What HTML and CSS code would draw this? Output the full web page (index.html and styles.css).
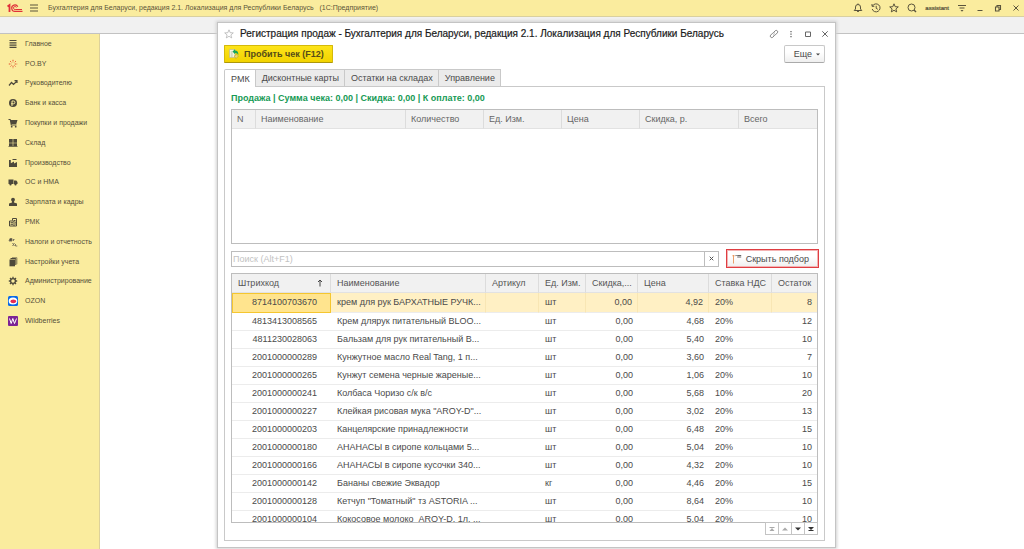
FILE: index.html
```html
<!DOCTYPE html>
<html lang="ru">
<head>
<meta charset="utf-8">
<title>Регистрация продаж</title>
<link rel="stylesheet" href="styles.css">
</head>
<body>
<div class="app">
  <header class="topbar">
    <svg class="logo" viewBox="0 0 16 10" fill="none" stroke="#e0313a"><path d="M.5 3.500 2.500 2V9" stroke-width="1.800"/><path d="M10.800 3.800A3.200 3.200 0 1 0 8 8.400H15.500" stroke-width="1.200"/><path d="M9.400 4.500A1.500 1.500 0 1 0 8.200 6.500H15" stroke-width="1"/></svg>
    <button class="icon-btn menu" aria-label="Меню"><svg viewBox="0 0 10 10"><path d="M1 2h8M1 5h8M1 8h8"/></svg></button>
    <span class="app-title">Бухгалтерия для Беларуси, редакция 2.1. Локализация для Республики Беларусь &nbsp; (1С:Предприятие)</span>
    <div class="top-tools">
      <button class="icon-btn" aria-label="Уведомления"><svg viewBox="0 0 10 10"><path d="M1.200 7.500h7.600L7.500 6V4a2.500 2.500 0 0 0-5 0v2zM5 .5v1M4 8q1 1.500 2 0"/></svg></button>
      <button class="icon-btn" aria-label="История"><svg viewBox="0 0 10 10"><path d="M1.500 3a4 4 0 1 1-.3 3M1 1v2.300h2.300M5.200 2.800v2.500l1.600 1"/></svg></button>
      <button class="icon-btn" aria-label="Избранное"><svg viewBox="0 0 10 10"><path d="m5 .8 1.200 2.900 3.100.2-2.400 2 .8 3L5 7.300 2.300 8.900l.8-3-2.400-2 3.100-.2z"/></svg></button>
      <button class="icon-btn" aria-label="Поиск"><svg viewBox="0 0 10 10"><circle cx="4.500" cy="4.500" r="3.500"/><path d="m7 7 2 2" stroke-width="1.500"/></svg></button>
      <a class="user" href="#">assistant</a>
      <button class="icon-btn" aria-label="Настройки"><svg viewBox="0 0 10 10"><path d="M1 2.500h8M2.500 5h5"/><path d="M3.500 7h3L5 8.800z" fill="#5a543c" stroke="none"/></svg></button>
      <button class="icon-btn" aria-label="Свернуть"><svg viewBox="0 0 10 10"><path d="M2.500 7.500h5"/></svg></button>
      <button class="icon-btn" aria-label="Восстановить"><svg viewBox="0 0 10 10"><path d="M2.500 4h3.500v4h-3.500zM4 4V2.500h3.500v4H6" stroke-width="1.100"/></svg></button>
      <button class="icon-btn" aria-label="Закрыть"><svg viewBox="0 0 10 10"><path d="m2.500 2.500 5 5m0-5-5 5"/></svg></button>
    </div>
  </header>
  <div class="strip"></div>
  <div class="main">
    <nav class="sidebar">
      <a href="#"><svg viewBox="0 0 10 10"><path d="M1.500 1.500h7M1.500 3.800h7M1.500 6.100h7M1.500 8.400h7" stroke="#4d493b" stroke-width="1.200"/></svg>Главное</a>
      <a href="#"><svg viewBox="0 0 10 10" stroke="#e4502e" fill="none"><path d="M5 .8v2.500M5 6.700v2.500M.8 5h2.500M6.700 5h2.500M2 2l1.500 1.500M6.500 6.500 8 8M8 2 6.500 3.500M3.500 6.500 2 8" stroke-dasharray="1.200 .6"/></svg>PO.BY</a>
      <a href="#"><svg viewBox="0 0 10 10"><path d="m1 7.500 2.500-3 2 2L9 3M6.500 2.700H9v2.200" fill="none" stroke="#4d493b" stroke-width="1.200"/></svg>Руководителю</a>
      <a href="#"><svg viewBox="0 0 10 10"><circle cx="5" cy="5" r="4"/><path d="M4 8V3h1.500a1.300 1.300 0 0 1 0 2.800H3" fill="none" stroke="#faec9e"/></svg>Банк и касса</a>
      <a href="#"><svg viewBox="0 0 10 10"><path d="M.5 1h2l.4 1h6.600L8.300 6H3.700v.6h4.800v.9H2.800L1.800 2H.5z"/><circle cx="3.700" cy="8.700" r=".9"/><circle cx="7.700" cy="8.700" r=".9"/></svg>Покупки и продажи</a>
      <a href="#"><svg viewBox="0 0 10 10"><path d="M1 1h3.700v3.700H1zM5.300 1H9v3.700H5.300zM1 5.300h3.700V8H1zM5.300 5.300H9V8H5.300zM.5 8.300h9v.8h-9z"/></svg>Склад</a>
      <a href="#"><svg viewBox="0 0 10 10"><path d="M1 9V2h1.800v3.300L6 3.500v2L9 4v5z"/><path d="M4.500 1.500h4" stroke="#4d493b"/></svg>Производство</a>
      <a href="#"><svg viewBox="0 0 10 10"><path d="M.5 2.500h5v4.500h-5zM6 3.500h2.300L9.500 5v2H6z"/><circle cx="2.500" cy="7.500" r="1.100"/><circle cx="7.500" cy="7.500" r="1.100"/></svg>ОС и НМА</a>
      <a href="#"><svg viewBox="0 0 10 10"><circle cx="5" cy="2.700" r="1.900"/><path d="M4 4h2v1.500l3 1V9H1V6.500l3-1z"/></svg>Зарплата и кадры</a>
      <a href="#"><svg viewBox="0 0 10 10"><g fill="none" stroke="#4d493b"><path d="M1.500 4h4.500v5H1.500zM4.500 3.500v-2h4V9h-2.500"/><path d="M2.500 5.700h2.500M2.500 7.300h2.500M6 3.500h1.500M7 5.200h1M7 7h1"/></g></svg>РМК</a>
      <a href="#"><svg viewBox="0 0 10 10" fill="none" stroke="#77705a"><path d="M1 4h3V1.500H2L1 4M5.500 2v2M5 2.500h1.500M4.500 6l2 3M6.500 6l-2 3M7.500 9h1.800M7.500 7v2" stroke-width=".9"/></svg>Налоги и отчетность</a>
      <a href="#"><svg viewBox="0 0 10 10"><path d="M1.500 2.500h5.500V9.300H1.500z"/><path d="M2.500 1.500h5.300V8" fill="none" stroke="#4d493b"/><path d="M4 .7h4.900v6.500" fill="none" stroke="#4d493b" stroke-width=".6"/></svg>Настройки учета</a>
      <a href="#"><svg class="gear" viewBox="0 0 10 10"><circle cx="5" cy="5" r="2.400"/><path d="M5 .8v1.600M5 7.600v1.600M.8 5h1.600M7.600 5h1.600M2 2l1.200 1.200M6.800 6.800 8 8M8 2 6.800 3.200M3.200 6.800 2 8"/></svg>Администрирование</a>
      <a href="#"><svg viewBox="0 0 10 10"><rect width="10" height="10" rx="1.500" fill="#0869e8"/><ellipse cx="5" cy="5" rx="4.300" ry="3.600" fill="#fff"/><ellipse cx="5.300" cy="5.300" rx="2.800" ry="1.900" fill="#e62c55"/></svg>OZON</a>
      <a href="#"><svg viewBox="0 0 10 10"><rect width="10" height="10" rx="1" fill="#7c2395"/><path d="m1.500 2.500 1.700 5 1.600-5 1.700 5 2-5" fill="none" stroke="#fff"/></svg>Wildberries</a>
    </nav>
    <main class="desktop"></main>
  </div>

  <section class="window">
    <div class="window-head">
      <button class="icon-btn star" aria-label="В избранное"><svg viewBox="0 0 10 10"><path d="m5 .8 1.200 2.900 3.100.2-2.400 2 .8 3L5 7.300 2.300 8.900l.8-3-2.400-2 3.100-.2z"/></svg></button>
      <h1>Регистрация продаж - Бухгалтерия для Беларуси, редакция 2.1. Локализация для Республики Беларусь</h1>
      <div class="window-tools">
        <button class="icon-btn" aria-label="Ссылка"><svg viewBox="0 0 10 10"><path d="m4.700 3.300 1.600-1.600a1.500 1.500 0 0 1 2.100 2.100L6.300 5.900a1.500 1.500 0 0 1-2 0M5.300 6.700 3.700 8.300a1.500 1.500 0 0 1-2.100-2.100l2.100-2.100a1.500 1.500 0 0 1 2 0" stroke-width=".8"/></svg></button>
        <button class="icon-btn" aria-label="Еще действия"><svg viewBox="0 0 10 10"><path d="M5 2v1.300M5 4.500v1.300M5 7v1.300" stroke-width="1.300"/></svg></button>
        <button class="icon-btn" aria-label="Развернуть"><svg viewBox="0 0 10 10"><path d="M2.500 3h5v4.500h-5z"/></svg></button>
        <button class="icon-btn" aria-label="Закрыть окно"><svg viewBox="0 0 10 10"><path d="m2.300 2.300 5.400 5.400m0-5.400-5.400 5.400"/></svg></button>
      </div>
    </div>
    <div class="commands">
      <button class="primary"><svg viewBox="0 0 10 10"><path d="M.5.500h5.500v8H.5z" fill="#f7f5df" stroke="#b5b48f" stroke-width=".6"/><path d="M1.700 3h2M1.700 5h2M1.700 7h2" stroke="#8caa8c" stroke-width=".7"/><path d="M3.500 2.500 6 .3v1.300q3.400 0 3.400 4.400Q8.500 4 6 4v1.200z" fill="#18a65b"/><path d="m5 7 2.800-1.500L9.500 7 7 9.500z" fill="#ecd96b" stroke="#a7983c" stroke-width=".5"/></svg>Пробить чек (F12)</button>
      <button class="btn more">Еще<svg class="caret" viewBox="0 0 4 3"><path d="M0 .5h4L2 2.500z"/></svg></button>
    </div>
    <div class="tabs" role="tablist">
      <button class="tab active" role="tab" aria-selected="true">РМК</button>
      <button class="tab" role="tab">Дисконтные карты</button>
      <button class="tab" role="tab">Остатки на складах</button>
      <button class="tab" role="tab">Управление</button>
    </div>
    <div class="pane">
      <p class="summary">Продажа | Сумма чека: 0,00 | Скидка: 0,00 | К оплате: 0,00</p>
      <div class="receipt">
        <table>
          <colgroup><col class="w24"><col><col class="w78"><col class="w78"><col class="w78"><col class="w99"><col class="w78"></colgroup>
          <thead><tr><th>N</th><th>Наименование</th><th>Количество</th><th>Ед. Изм.</th><th>Цена</th><th>Скидка, р.</th><th>Всего</th></tr></thead>
        </table>
      </div>
      <div class="search-row">
        <div class="search"><input type="text" aria-label="Поиск" placeholder="Поиск (Alt+F1)"><button aria-label="Очистить"><svg viewBox="0 0 5 5"><path d="m.7.700 3.600 3.600m0-3.600L.7 4.300"/></svg></button></div>
        <button class="btn toggle"><svg viewBox="0 0 10 10"><path d="M1.500 1v8.500M.3 2.300 1.500 1l1.200 1.300" fill="none" stroke="#e9955a" stroke-width=".9"/><path d="M3.500 1.500h1.200M5.200 1.500h4M5.200 3h4" stroke="#666" stroke-width="1.100"/></svg>Скрыть подбор</button>
      </div>
      <div class="goods">
        <table>
          <colgroup><col class="w99"><col><col class="w53"><col class="w47"><col class="w52"><col class="w71"><col class="w63"><col class="w45"></colgroup>
          <thead><tr><th><span class="sorted">Штрихкод<svg viewBox="0 0 6 8"><path d="M3 7.500V1M1 3l2-2 2 2"/></svg></span></th><th>Наименование</th><th>Артикул</th><th>Ед. Изм.</th><th>Скидка,...</th><th>Цена</th><th>Ставка НДС</th><th>Остаток</th></tr></thead>
          <tbody>
            <tr class="selected"><td>8714100703670</td><td>крем для рук БАРХАТНЫЕ РУЧК...</td><td></td><td>шт</td><td>0,00</td><td>4,92</td><td>20%</td><td>8</td></tr>
            <tr><td>4813413008565</td><td>Крем длярук питательный BLOO...</td><td></td><td>шт</td><td>0,00</td><td>4,68</td><td>20%</td><td>12</td></tr>
            <tr><td>4811230028063</td><td>Бальзам для рук питательный B...</td><td></td><td>шт</td><td>0,00</td><td>5,40</td><td>20%</td><td>10</td></tr>
            <tr><td>2001000000289</td><td>Кунжутное масло Real Tang, 1 п...</td><td></td><td>шт</td><td>0,00</td><td>3,60</td><td>20%</td><td>7</td></tr>
            <tr><td>2001000000265</td><td>Кунжут семена черные жареные...</td><td></td><td>шт</td><td>0,00</td><td>1,06</td><td>20%</td><td>10</td></tr>
            <tr><td>2001000000241</td><td>Колбаса Чоризо с/к в/с</td><td></td><td>шт</td><td>0,00</td><td>5,68</td><td>10%</td><td>20</td></tr>
            <tr><td>2001000000227</td><td>Клейкая рисовая мука "AROY-D"...</td><td></td><td>шт</td><td>0,00</td><td>3,02</td><td>20%</td><td>13</td></tr>
            <tr><td>2001000000203</td><td>Канцелярские принадлежности</td><td></td><td>шт</td><td>0,00</td><td>6,48</td><td>20%</td><td>15</td></tr>
            <tr><td>2001000000180</td><td>АНАНАСЫ в сиропе кольцами 5...</td><td></td><td>шт</td><td>0,00</td><td>5,04</td><td>20%</td><td>10</td></tr>
            <tr><td>2001000000166</td><td>АНАНАСЫ в сиропе кусочки 340...</td><td></td><td>шт</td><td>0,00</td><td>4,32</td><td>20%</td><td>10</td></tr>
            <tr><td>2001000000142</td><td>Бананы свежие Эквадор</td><td></td><td>кг</td><td>0,00</td><td>4,46</td><td>20%</td><td>15</td></tr>
            <tr><td>2001000000128</td><td>Кетчуп "Томатный" тз ASTORIA ...</td><td></td><td>шт</td><td>0,00</td><td>8,64</td><td>20%</td><td>10</td></tr>
            <tr><td>2001000000104</td><td>Кокосовое молоко&nbsp; AROY-D, 1л, ...</td><td></td><td>шт</td><td>0,00</td><td>5,04</td><td>20%</td><td>10</td></tr>
          </tbody>
        </table>
      </div>
      <div class="pager">
        <button disabled aria-label="В начало"><svg viewBox="0 0 6 6"><path d="M.5 1h5v1h-5zM3 2l2.500 3h-5z"/></svg></button>
        <button disabled aria-label="Вверх"><svg viewBox="0 0 6 6"><path d="m3 1.500 3 3H0z"/></svg></button>
        <button aria-label="Вниз"><svg viewBox="0 0 6 6"><path d="M0 1.500h6l-3 3z"/></svg></button>
        <button aria-label="В конец"><svg viewBox="0 0 6 6"><path d="M0 1h6L3 4zM.5 4h5v1h-5z"/></svg></button>
      </div>
    </div>
  </section>
</div>
</body>
</html>
```

FILE: styles.css
```css
* { box-sizing: border-box; }
body {
  margin: 0;
  font: 9px/12px "Liberation Sans", Arial, sans-serif;
  color: #4a4a4a;
  background: #fff;
}
button, input { font: inherit; color: inherit; }
button { padding: 0; border: 0; background: none; }
a { color: inherit; text-decoration: none; }
svg { display: block; flex: none; }

.app { position: relative; min-height: 100vh; display: flex; flex-direction: column; overflow: hidden; }
.topbar {
  display: flex;
  align-items: center;
  height: 17px;
  padding: 0 3px 0 7px;
  background: #faec9e;
  border-bottom: 1px solid #d9d0a0;
}
.logo { width: 16px; height: 10px; }
.icon-btn svg { width: 10px; height: 10px; fill: none; stroke: #5a543c; }
.menu { margin: 0 9px 0 6px; }
.app-title { font-size: 7px; line-height: 10px; color: #5a5439; white-space: nowrap; }
.top-tools { display: flex; align-items: center; gap: 8px; margin-left: auto; }
.user { font-size: 6px; line-height: 10px; color: #4d4835; -webkit-text-stroke: .2px #4d4835; }
.strip { height: 17px; background: #f1f1f1; border-bottom: 1px solid #c2c2c2; }
.main { flex: 1; display: flex; }
.desktop { flex: 1; }
.sidebar {
  width: 100px;
  display: grid;
  grid-auto-rows: 1fr;
  align-self: stretch;
  align-content: start;
  padding-bottom: 218px;
  background: #faec9e;
  border-right: 1px solid #ddd19a;
  font-size: 7px;
  color: #554f3a;
}
.sidebar a { display: flex; align-items: center; gap: 7px; padding-left: 8px; white-space: nowrap; }
.sidebar svg { width: 10px; height: 10px; fill: #4d493b; }
.sidebar .gear { fill: none; stroke: #4d493b; stroke-width: 1.3; }

.window {
  position: absolute;
  inset: 22px 188px 1px 217px;
  display: flex;
  flex-direction: column;
  padding: 0 10px 6px 6px;
  background: #fff;
  border: 1px solid #c4c4c4;
  box-shadow: 0 0 3px 1px #d0d0d0;
}
.window-head { display: flex; align-items: center; height: 22px; }
.star svg { stroke: #aaa; stroke-width: .7; }
h1 { margin: 0 0 0 6px; font-size: 10px; line-height: 14px; font-weight: 400; color: #1c1c1c; -webkit-text-stroke: .2px #1c1c1c; white-space: nowrap; }
.window-tools { display: flex; gap: 7px; margin: 0 -5px 0 auto; }
.window-tools svg { stroke: #666; }
.commands { display: flex; justify-content: space-between; height: 18px; }
.primary {
  display: flex;
  align-items: center;
  gap: 5px;
  padding: 0 8px 0 4px;
  font-weight: 700;
  color: #554c17;
  background: linear-gradient(#fde41a, #f2d300);
  border: 1px solid #d4b90b;
  border-bottom-color: #ad970c;
  border-radius: 1px;
}
.primary svg { width: 10px; height: 10px; }
.btn {
  display: flex;
  align-items: center;
  background: linear-gradient(#fff 40%, #efefef);
  border: 1px solid #c8c8c8;
  border-bottom-color: #aaa;
  border-radius: 2px;
}
.more { padding: 0 4px 0 9px; gap: 4px; }
.caret { width: 4px; height: 3px; fill: #444; }

.tabs { display: flex; height: 17px; margin-top: 6px; }
.tab {
  padding: 0 5px 0 6px;
  background: #ebebeb;
  border: 1px solid #c9c9c9;
  border-left-width: 0;
  border-bottom: 0;
  white-space: nowrap;
}
.tab.active { z-index: 1; margin-bottom: -1px; background: #fff; border-left-width: 1px; border-radius: 2px 0 0; }
.pane {
  flex: 1;
  min-height: 0;
  display: flex;
  flex-direction: column;
  padding: 5px 6px;
  border: 1px solid #c9c9c9;
}
.summary { margin: 0 0 5px; font-weight: 700; color: #169a55; }

table { width: 100%; table-layout: fixed; border-collapse: separate; border-spacing: 0; }
th, td { padding: 0 5px; overflow: hidden; white-space: nowrap; text-align: left; }
th { height: 19px; font-weight: 400; color: #666; background: #f1f1f1; border-right: 1px solid #dcdcdc; border-bottom: 1px solid #e2e2e2; }
th:last-child { border-right: 0; }
.w24 { width: 24px; }
.w45 { width: 45px; }
.w47 { width: 47px; }
.w52 { width: 52px; }
.w53 { width: 53px; }
.w63 { width: 63px; }
.w71 { width: 71px; }
.w78 { width: 78px; }
.w99 { width: 99px; }
.receipt { flex: 0 0 135px; border: 1px solid #bdbdbd; }

.search-row { display: flex; gap: 7px; margin: 5px -1px 5px 0; height: 19px; align-items: center; }
.search { flex: 1; display: flex; height: 16px; border: 1px solid #bdbdbd; }
.search input { flex: 1; min-width: 0; padding: 0 1px; border: 0; outline: 0; background: #fff; }
.search input::placeholder { color: #c2c2c2; opacity: 1; }
.search button { display: grid; place-items: center; width: 14px; border-left: 1px solid #bdbdbd; }
.search svg { width: 5px; height: 5px; stroke: #555; }
.toggle { gap: 4px; height: 19px; padding: 0 9px 0 5px; border: 1px solid #df3d42; outline: 1px solid #f4b3b3; outline-offset: -2px; border-radius: 0; }
.toggle svg { width: 10px; height: 10px; }

.goods { flex: 1; min-height: 0; overflow: hidden; border: 1px solid #bdbdbd; }
.goods table { height: 255px; }
.goods th { padding: 0 2px 0 6px; color: #555; }
.goods td { padding: 0 5px 0 6px; line-height: 11px; border-bottom: 1px solid #ececec; }
.goods td:nth-child(2) { padding-right: 0; }
.goods td:first-child { padding-right: 14px; text-align: right; }
.goods td:nth-child(5), .goods td:nth-child(6), .goods td:nth-child(8) { text-align: right; }
.goods .selected td { background: #fff0c4; border-right: 1px solid #f8e6b4; }
.goods .selected td:last-child { border-right: 0; }
.goods .selected td:first-child { padding-right: 13px; background: #ffe48e; border: 1px solid #f5c62f; }
.sorted { display: flex; align-items: center; justify-content: space-between; }
.sorted svg { width: 6px; height: 8px; margin-right: 5px; fill: none; stroke: #444; }

.pager { align-self: flex-end; display: flex; margin-top: -1px; }
.pager button { display: grid; place-items: center; width: 14px; height: 13px; margin-left: -1px; border: 1px solid #c4c4c4; background: #fff; }
.pager svg { width: 6px; height: 6px; fill: #333; }
.pager button:disabled svg { fill: #aaa; }
```
